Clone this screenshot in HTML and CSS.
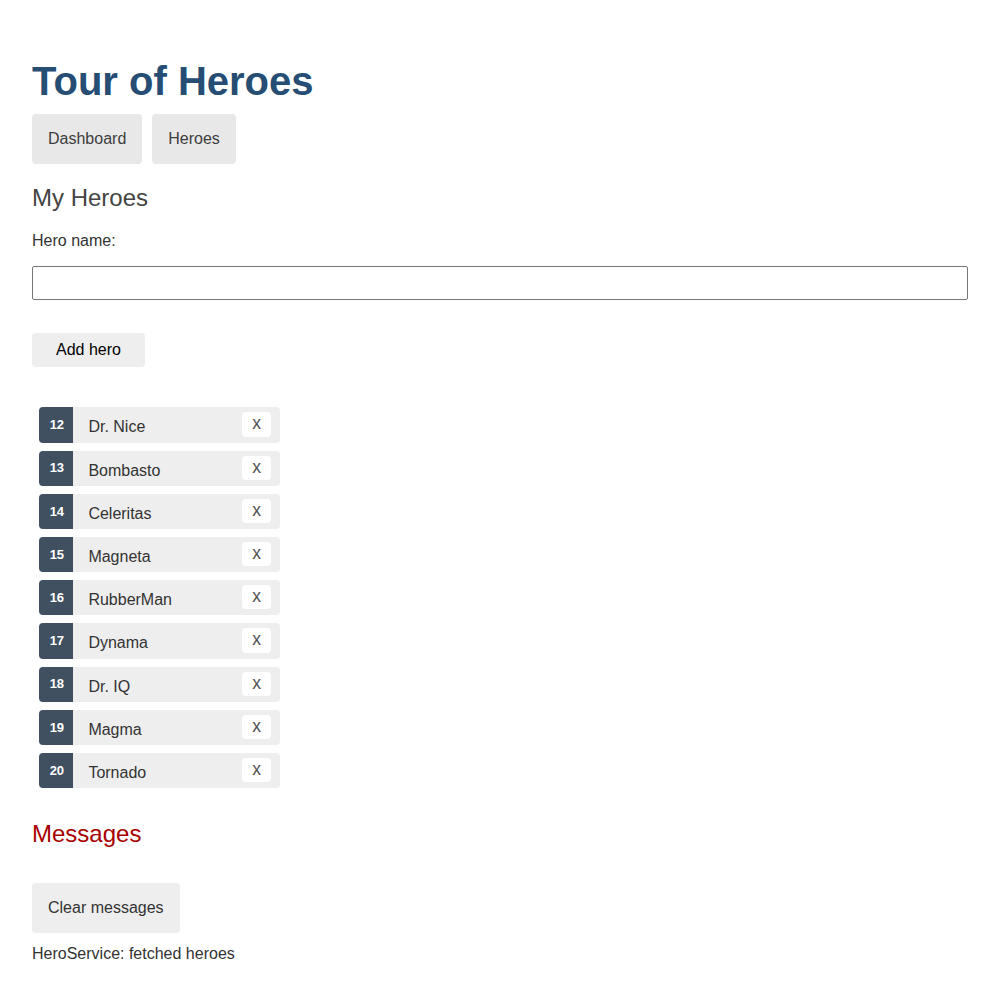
FILE: index.html
```html
<!DOCTYPE html>
<html lang="en">
<head>
<meta charset="utf-8">
<title>Tour of Heroes</title>
<link rel="stylesheet" href="styles.css">
</head>
<body>
  <h1 class="title">Tour of Heroes</h1>
  <nav class="nav">
    <a class="nav-link" href="#dashboard">Dashboard</a>
    <a class="nav-link" href="#heroes">Heroes</a>
  </nav>

  <h2 class="section-title">My Heroes</h2>
  <div class="add-form">
    <label class="add-label" for="new-hero">Hero name:</label>
    <input class="add-input" id="new-hero" type="text">
    <button class="add-button" type="button">Add hero</button>
  </div>

  <ul class="heroes">
    <li class="hero"><span class="badge">12</span><span class="hero-name">Dr. Nice</span><button class="delete" type="button" title="delete hero">x</button></li>
    <li class="hero"><span class="badge">13</span><span class="hero-name">Bombasto</span><button class="delete" type="button" title="delete hero">x</button></li>
    <li class="hero"><span class="badge">14</span><span class="hero-name">Celeritas</span><button class="delete" type="button" title="delete hero">x</button></li>
    <li class="hero"><span class="badge">15</span><span class="hero-name">Magneta</span><button class="delete" type="button" title="delete hero">x</button></li>
    <li class="hero"><span class="badge">16</span><span class="hero-name">RubberMan</span><button class="delete" type="button" title="delete hero">x</button></li>
    <li class="hero"><span class="badge">17</span><span class="hero-name">Dynama</span><button class="delete" type="button" title="delete hero">x</button></li>
    <li class="hero"><span class="badge">18</span><span class="hero-name">Dr. IQ</span><button class="delete" type="button" title="delete hero">x</button></li>
    <li class="hero"><span class="badge">19</span><span class="hero-name">Magma</span><button class="delete" type="button" title="delete hero">x</button></li>
    <li class="hero"><span class="badge">20</span><span class="hero-name">Tornado</span><button class="delete" type="button" title="delete hero">x</button></li>
  </ul>

  <section class="messages">
    <h2 class="messages-title">Messages</h2>
    <button class="clear" type="button">Clear messages</button>
    <div class="message">HeroService: fetched heroes</div>
  </section>
</body>
</html>
```

FILE: styles.css
```css
* {
  font-family: "Liberation Sans", Arial, Helvetica, sans-serif;
}

html {
  background: #fff;
}

body {
  margin: 0;
  padding: 32px 32px 16px;
  color: #333;
  font-size: 16px;
}

.title {
  color: #264d73;
  font-size: 40px;
  font-weight: bold;
  margin: 26.8px 0 0;
}

.nav {
  display: flex;
  gap: 10px;
  padding-top: 10px;
}

.nav-link {
  display: block;
  padding: 16px;
  background-color: #e8e8e8;
  color: #3d3d3d;
  text-decoration: none;
  border-radius: 4px;
  font-size: 16px;
  line-height: 18.4px;
}

.section-title {
  color: #444;
  font-size: 24px;
  font-weight: normal;
  line-height: 27.6px;
  margin: 19.92px 0;
}

.add-form {
  display: flex;
  flex-direction: column;
  align-items: flex-start;
}

.add-label {
  font-size: 16px;
  line-height: 18.4px;
}

.add-input {
  display: block;
  width: 100%;
  box-sizing: border-box;
  margin: 16px 0;
  padding: 8px;
  font-size: 13.33px;
  line-height: 16px;
  height: 34px;
  border: 1px solid #767676;
  border-radius: 2px;
  color: #333;
  background: #fff;
}

.add-button {
  background-color: #eee;
  color: #000;
  border: none;
  border-radius: 4px;
  padding: 8px 24px;
  font-size: 16px;
  line-height: 18.4px;
  margin: 17px 0 32px;
  cursor: pointer;
}

.heroes {
  list-style: none;
  margin: 0 0 32px;
  padding: 0;
  width: 240px;
}

.hero {
  display: flex;
  align-items: flex-start;
  height: 35.2px;
  margin: 8px;
  width: 240px;
  background-color: #eee;
  border-radius: 4px;
}

.badge {
  align-self: stretch;
  box-sizing: border-box;
  margin-left: -1px;
  min-width: 34.2px;
  padding: 10.8px 9.1px 0;
  font-size: 13px;
  line-height: 13px;
  font-weight: bold;
  color: #fff;
  text-align: right;
  background-color: #405061;
  border-radius: 4px 0 0 4px;
}

.hero-name {
  margin: 11px 0 0 15.2px;
  font-size: 16px;
  line-height: 18.4px;
  color: #333;
}

.delete {
  margin: 5px 9px 0 auto;
  padding: 1px 10px 3px;
  background-color: #fff;
  color: #525252;
  border: none;
  border-radius: 4px;
  font-size: 17.6px;
  line-height: 20.2px;
  cursor: pointer;
}

.messages {
  display: flex;
  flex-direction: column;
  align-items: flex-start;
}

.messages-title {
  color: #a80000;
  font-size: 24px;
  font-weight: normal;
  line-height: 27.6px;
  margin: 0;
}

.clear {
  margin: 34.9px 0 12px;
  padding: 16px;
  background-color: #eee;
  color: #333;
  border: none;
  border-radius: 4px;
  font-size: 16px;
  line-height: 18.4px;
  cursor: pointer;
}

.message {
  font-size: 16px;
  line-height: 18.4px;
}
```
